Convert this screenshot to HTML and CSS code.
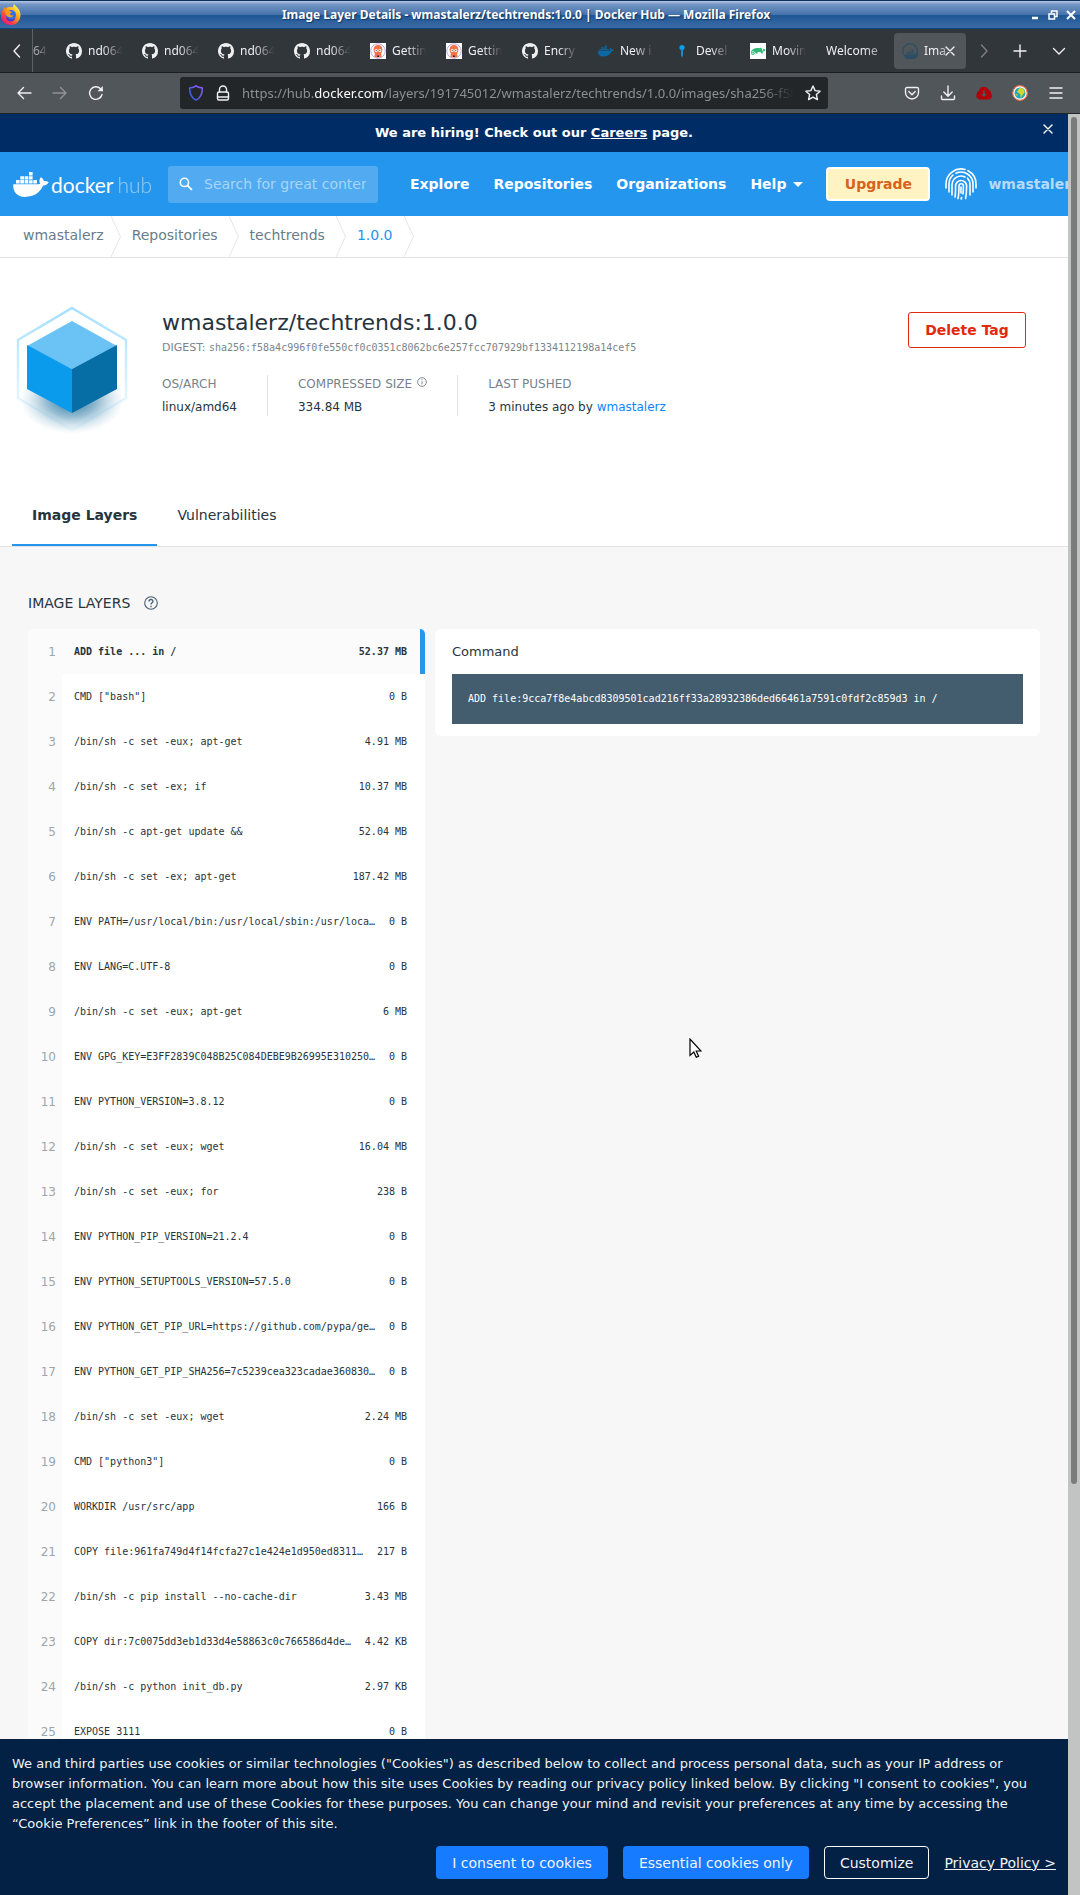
FILE: index.html
```html
<!DOCTYPE html>
<html lang="en">
<head>
<meta charset="utf-8">
<meta name="viewport" content="width=device-width, initial-scale=1">
<title>Image Layer Details - wmastalerz/techtrends:1.0.0 | Docker Hub</title>
<link rel="stylesheet" href="styles.css">
</head>
<body>
<svg class="defs" aria-hidden="true">
  <symbol id="github" viewBox="0 0 16 16"><path fill="currentColor" d="M8 0C3.58 0 0 3.58 0 8c0 3.54 2.29 6.53 5.47 7.59.4.07.55-.17.55-.38 0-.19-.01-.82-.01-1.49-2.01.37-2.53-.49-2.69-.94-.09-.23-.48-.94-.82-1.13-.28-.15-.68-.52-.01-.53.63-.01 1.08.58 1.23.82.72 1.21 1.87.87 2.33.66.07-.52.28-.87.51-1.07-1.78-.2-3.64-.89-3.64-3.95 0-.87.31-1.59.82-2.15-.08-.2-.36-1.02.08-2.12 0 0 .67-.21 2.2.82.64-.18 1.32-.27 2-.27s1.36.09 2 .27c1.53-1.04 2.2-.82 2.2-.82.44 1.1.16 1.92.08 2.12.51.56.82 1.27.82 2.15 0 3.07-1.87 3.75-3.65 3.95.29.25.54.73.54 1.48 0 1.07-.01 1.93-.01 2.2 0 .21.15.46.55.38A8.01 8.01 0 0 0 16 8c0-4.42-3.58-8-8-8z"/></symbol>
  <symbol id="whale" viewBox="0 30 642 452"><path fill="currentColor" d="M349.9 236.3h-66.1v-59.4h66.1v59.4zm0-204.3h-66.1v60.7h66.1V32zm78.2 144.8H362v59.4h66.1v-59.4zm-156.3-72.1h-66.1v60.1h66.1v-60.1zm78.1 0h-66.1v60.1h66.1v-60.1zm276.8 100c-14.4-9.7-47.6-13.2-73.1-8.4-3.3-24-16.7-44.9-41.1-63.7l-14-9.3-9.3 14c-18.4 27.8-23.4 73.6-3.7 103.8-8.7 4.7-25.8 11.1-48.4 10.7H2.4c-8.7 50.8 5.8 116.8 44 162.1 37.1 43.9 92.7 66.2 165.4 66.2 157.4 0 273.9-72.5 328.4-204.2 21.4.4 67.6.1 91.3-45.2 1.5-2.5 6.6-13.2 8.5-17.1l-13.3-8.9zm-511.1-27.9h-66v59.4h66.1v-59.4zm78.1 0h-66.1v59.4h66.1v-59.4zm78.1 0h-66.1v59.4h66.1v-59.4zm-78.1-72.1h-66.1v60.1h66.1v-60.1z"/></symbol>
  <symbol id="octopus" viewBox="0 0 16 16"><rect width="16" height="16" fill="#fff"/><circle cx="8" cy="8" r="7.2" fill="#fff" stroke="#b9a9dc"/><path fill="#f4734b" d="M8 2C5 2 3.600 4 3.600 6.400c0 1.600.5 2.600 1 3.600.4 1 .2 2.400-.4 3.400 1 .6 2.400 1 3.800 1s2.800-.4 3.800-1c-.6-1-.8-2.400-.4-3.400.5-1 1-2 1-3.600C12.400 4 11 2 8 2z"/><circle cx="6.200" cy="7.500" r="1.500" fill="#fff"/><circle cx="9.800" cy="7.500" r="1.500" fill="#fff"/><circle cx="6.200" cy="7.500" r=".6" fill="#333"/><circle cx="9.800" cy="7.500" r=".6" fill="#333"/><path d="M7 12.500h2v1.500H7z" fill="#333"/></symbol>
</svg>

<header class="browser">
  <div class="titlebar">
    <svg class="firefox" viewBox="0 0 22 22" aria-hidden="true">
      <defs>
        <linearGradient id="fx" x1="0.85" y1="0.1" x2="0.2" y2="0.95"><stop offset="0" stop-color="#fff44f"/><stop offset=".4" stop-color="#ffa31a"/><stop offset=".7" stop-color="#ff4a3a"/><stop offset="1" stop-color="#e31587"/></linearGradient>
      </defs>
      <path fill="url(#fx)" d="M3.200 5.500C3.700 4.500 4.500 3.400 5 3c0 .8.300 1.400.6 1.900C7.500 2.800 10 2.200 13 3.500c0-1.600.4-2.800 1.200-3.500.8 2 3.600 3.300 5 6 2.300 4.200 1.400 9.300-1.800 12.400-4 3.800-10.600 3.500-14.200-.6C.4 14.700.2 9.500 3.200 5.500z"/>
      <circle cx="11" cy="11" r="5" fill="#2a6ff0"/>
      <path fill="#4b3bbf" d="M6.500 12c1 3.500 6 5 9 1.500-.5 3-3 4-5 4-3 0-5-2.500-4-5.500z"/>
      <path fill="#ff9a1a" d="M5 6.500c1.500-1 3.500-1 4.500 0 .3 1 2 1 2.500 1.300-.3 1.200-2 1.600-2 2.400.2 1.500 2.500 1.600 3.500.8-.5 1.800-2.200 2.700-4 2.300C6.500 12.600 5 10 5 6.500z"/>
    </svg>
    <h1 class="window-title">Image Layer Details - wmastalerz/techtrends:1.0.0 | Docker Hub — Mozilla Firefox</h1>
    <div class="window-buttons">
      <button aria-label="Minimize"><svg viewBox="0 0 10 10"><path d="M2 8h6" stroke="#fff" stroke-width="2.500"/></svg></button>
      <button aria-label="Restore"><svg viewBox="0 0 10 10"><path d="M3.500 3V1H9v5.500H7M1 4h5.500v5H1z" fill="none" stroke="#fff" stroke-width="1.500"/></svg></button>
      <button aria-label="Close"><svg viewBox="0 0 10 10"><path d="M1 1l8 8M9 1L1 9" stroke="#fff" stroke-width="2"/></svg></button>
    </div>
  </div>

  <nav class="tabstrip" aria-label="Browser tabs">
    <button class="scroll-left" aria-label="Scroll left"><svg viewBox="0 0 10 14"><path d="M7.500 1L2 7l5.500 6" class="line"/></svg></button>
    <button class="tab cut"><span>64</span></button>
    <button class="tab"><svg><use href="#github"/></svg><span>nd064</span></button>
    <button class="tab"><svg><use href="#github"/></svg><span>nd064</span></button>
    <button class="tab"><svg><use href="#github"/></svg><span>nd064</span></button>
    <button class="tab"><svg><use href="#github"/></svg><span>nd064</span></button>
    <button class="tab"><svg><use href="#octopus"/></svg><span>Gettin</span></button>
    <button class="tab"><svg><use href="#octopus"/></svg><span>Gettin</span></button>
    <button class="tab"><svg><use href="#github"/></svg><span>Encry</span></button>
    <button class="tab"><svg class="teal"><use href="#whale"/></svg><span>New i</span></button>
    <button class="tab"><svg viewBox="0 0 16 16"><circle cx="8" cy="4.500" r="2.600" fill="#0f9fe8"/><path d="M7 6h2v6l-1 3-1-3z" fill="#0f8fd8"/></svg><span>Devel</span></button>
    <button class="tab"><svg viewBox="0 0 16 16"><rect width="16" height="16" fill="#fff"/><path fill="#30ba78" d="M1 8.500C2.500 5.500 6 4.600 9.500 5.200l1.500-.8.400 1c1.600.2 3.100.6 3.700 1.300l-.3 1.600-2.300.3.500 2h-1.600l-.9-1.500H7.500l.2 1.500H6l-.6-1.300c-.2 1.900-1.300 2.700-2.400 2.700C1.500 12 .5 10.500 1 8.500z"/><circle cx="3.200" cy="9.600" r="1.200" fill="none" stroke="#fff" stroke-width=".7"/><circle cx="12.500" cy="6.800" r=".7" fill="#fff"/></svg><span>Movin</span></button>
    <button class="tab wide"><span>Welcome</span></button>
    <button class="tab active"><svg viewBox="0 0 16 16"><circle cx="8" cy="8" r="7.300" fill="none" stroke="#2c4e63" stroke-width="1.200"/><svg x="2.500" y="4" width="11" height="8" color="#2c4e63"><use href="#whale"/></svg></svg><span>Ima</span></button>
    <button class="strip-icon dim" aria-label="Scroll right"><svg viewBox="0 0 10 14"><path d="M2.500 1L8 7l-5.500 6" class="line"/></svg></button>
    <button class="strip-icon" aria-label="New tab"><svg viewBox="0 0 14 14"><path d="M7 1v12M1 7h12" class="line"/></svg></button>
    <button class="strip-icon" aria-label="List all tabs"><svg viewBox="0 0 14 14"><path d="M1.500 4.500L7 10l5.500-5.500" class="line"/></svg></button>
    <button class="tab-close" aria-label="Close tab"><svg viewBox="0 0 10 10"><path d="M1 1l8 8M9 1L1 9" class="line"/></svg></button>
  </nav>

  <div class="toolbar">
    <div class="history">
      <button aria-label="Back"><svg viewBox="0 0 16 16"><path d="M15 8H2M7.500 2.500L2 8l5.500 5.500" class="line"/></svg></button>
      <button class="dim" aria-label="Forward"><svg viewBox="0 0 16 16"><path d="M1 8h13M8.500 2.500L14 8l-5.500 5.500" class="line"/></svg></button>
      <button aria-label="Reload"><svg viewBox="0 0 16 16"><path d="M14 9.500A6.300 6.300 0 1 1 12.500 3.800L14.300 5.500" class="line"/><path d="M14.800 1v5.200H9.600z" fill="currentColor"/></svg></button>
    </div>
    <div class="urlbar">
      <svg viewBox="0 0 16 16" aria-hidden="true"><defs><linearGradient id="sh" x1="1" y1="0" x2="0" y2="1"><stop offset="0" stop-color="#9059ff"/><stop offset="1" stop-color="#2a62d8"/></linearGradient></defs><path d="M8 .8c1.900 1.500 4.200 1.900 6.300 2.200.2 5.500-1.800 10-6.300 12.200C3.500 13 1.500 8.500 1.700 3 3.800 2.700 6.100 2.300 8 .8z" fill="none" stroke="url(#sh)" stroke-width="1.500"/></svg>
      <svg viewBox="0 0 16 16" aria-hidden="true"><rect x="2.500" y="7" width="11" height="8" rx="1.500" class="line"/><path d="M4.500 7V4.500a3.500 3.500 0 0 1 7 0V7M2.500 12h11" class="line"/></svg>
      <div class="url" role="textbox" aria-label="Address">https://hub.<b>docker.com</b>/layers/191745012/wmastalerz/techtrends/1.0.0/images/sha256-f58a4c</div>
      <button aria-label="Bookmark"><svg viewBox="0 0 16 16"><path d="M8 1l2.100 4.600 5 .6-3.700 3.400 1 5L8 12.100l-4.400 2.500 1-5L.9 6.200l5-.6z" class="line"/></svg></button>
    </div>
    <div class="tools">
      <button aria-label="Pocket"><svg viewBox="0 0 16 16"><path d="M3 2.500h10A1.500 1.500 0 0 1 14.500 4v3.500a6.500 6.500 0 0 1-13 0V4A1.500 1.500 0 0 1 3 2.500zM4.800 6.500L8 9.700l3.200-3.200" class="line"/></svg></button>
      <button aria-label="Downloads"><svg viewBox="0 0 16 16"><path d="M8 1v10M3.800 7L8 11.200 12.200 7M1.500 11v2.500a1 1 0 0 0 1 1h11a1 1 0 0 0 1-1V11" class="line"/></svg></button>
      <button aria-label="Cloud download"><svg viewBox="0 0 16 16"><path fill="#b00009" d="M3.500 14.500C1 14.500-.3 11.500.8 9 .8 7.200 1.800 5.900 3.200 5.700 3.400 3.200 5.500 1.700 7.800 1.700c2.300 0 4.200 1.300 4.800 3.400 1.700.4 2.600 2.100 2.500 3.700 1.700 2.200.4 5.700-2.600 5.700z"/><path fill="#50565a" d="M7.200 5.500h1.600V9H11l-3 3-3-3h2.200z"/></svg></button>
      <button aria-label="Translate"><svg viewBox="0 0 16 16"><circle cx="8" cy="8" r="7.300" fill="#fff" stroke="#e8704a" stroke-width="1.200"/><circle cx="8" cy="8" r="5.500" fill="#1fa6b8"/><path fill="#d6d52c" d="M7 3.500c2-1 4.500 0 5.500 2.500.3 2-.8 2.500-1.500 3.300L9.500 12H8.300l.2-2.500L6.500 8 5 7zM3.500 9l2 .5-.3 2z"/></svg></button>
      <button aria-label="Menu"><svg viewBox="0 0 16 16"><path d="M2 3h12M2 8h12M2 13h12" class="line"/></svg></button>
    </div>
  </div>
</header>

<div class="viewport">
  <div class="site">
    <div class="scroller">
      <aside class="hiring">
        <p>We are hiring! Check out our <a href="#careers">Careers</a> page.</p>
        <button aria-label="Dismiss"><svg viewBox="0 0 10 10"><path d="M1 1l8 8M9 1L1 9" class="line"/></svg></button>
      </aside>

      <nav class="hubnav" aria-label="Main">
        <a class="logo" href="#home"><svg aria-hidden="true"><use href="#whale"/></svg><span>docker</span><span class="hub">hub</span></a>
        <label class="search">
          <svg viewBox="0 0 16 16" aria-hidden="true"><circle cx="6.200" cy="6.200" r="4.700" fill="none" stroke="#fff" stroke-width="1.800"/><path d="M9.800 9.800l5 5" stroke="#fff" stroke-width="2"/></svg>
          <input type="text" aria-label="Search" placeholder="Search for great content">
        </label>
        <div class="links">
          <a href="#explore">Explore</a>
          <a href="#repositories">Repositories</a>
          <a href="#organizations">Organizations</a>
          <button class="help">Help<svg viewBox="0 0 10 5" aria-hidden="true"><path d="M0 0h10L5 5z" fill="#fff"/></svg></button>
        </div>
        <button class="upgrade">Upgrade</button>
        <a class="user" href="#profile">
          <svg viewBox="0 0 32 32" aria-hidden="true"><g fill="none" stroke="#fff" stroke-width="1.600" stroke-linecap="round"><path d="M1 20v-4A15 15 0 0 1 20 1.500M23 2.700A15 15 0 0 1 31 16v4"/><path d="M4 24v-8A12 12 0 0 1 8 7M11 5.200A12 12 0 0 1 28 16v8"/><path d="M7 27V17a9 9 0 0 1 13-8M22.500 10.200A9 9 0 0 1 25 17v10"/><path d="M10 29c.6-3 .6-6 .6-11a5.500 5.500 0 0 1 11 0c0 5-.1 8-1 12.500"/><path d="M13 30.500c1-4 1-8 1-12.500a2.200 2.200 0 0 1 4.400 0c0 3 0 5-.4 8"/><path d="M16 19v6M16.500 29.500l-.3 1.500"/></g></svg>
          <span>wmastalerz</span>
        </a>
      </nav>

      <nav class="crumbs" aria-label="Breadcrumb">
        <a href="#u">wmastalerz</a><svg viewBox="0 0 10 40" preserveAspectRatio="none"><path d="M0 0l9.500 20L0 40"/></svg>
        <a href="#r">Repositories</a><svg viewBox="0 0 10 40" preserveAspectRatio="none"><path d="M0 0l9.500 20L0 40"/></svg>
        <a href="#t">techtrends</a><svg viewBox="0 0 10 40" preserveAspectRatio="none"><path d="M0 0l9.500 20L0 40"/></svg>
        <a href="#v" class="current" aria-current="page">1.0.0</a><svg viewBox="0 0 10 40" preserveAspectRatio="none"><path d="M0 0l9.500 20L0 40"/></svg>
      </nav>

      <section class="summary">
        <svg class="cube" viewBox="0 0 114 136" aria-hidden="true">
          <defs>
            <linearGradient id="hex" x1="0" y1="0" x2="0" y2="1"><stop offset="0" stop-color="#a5dfff"/><stop offset=".6" stop-color="#d8f2ff"/><stop offset="1" stop-color="#f4fbff"/></linearGradient>
            <radialGradient id="shade"><stop offset="0" stop-color="#005b8c" stop-opacity=".9"/><stop offset=".5" stop-color="#2f7ba6" stop-opacity=".5"/><stop offset="1" stop-color="#8fbdd6" stop-opacity="0"/></radialGradient>
          </defs>
          <path d="M57 2l54 32v58l-54 32L3 92V34z" fill="none" stroke="url(#hex)" stroke-width="2.500"/>
          <ellipse cx="57" cy="94" rx="52" ry="34" fill="url(#shade)"/>
          <path d="M57 15l45 25-45 23-45-23z" fill="#6bc3f5"/>
          <path d="M12 39l45 24v44L12 83z" fill="#0b9bed"/>
          <path d="M102 39L57 63v44l45-24z" fill="#066da5"/>
        </svg>
        <div class="info">
          <h2>wmastalerz/techtrends:1.0.0</h2>
          <p class="digest">DIGEST: <code>sha256:f58a4c996f0fe550cf0c0351c8062bc6e257fcc707929bf1334112198a14cef5</code></p>
          <dl class="facts">
            <div><dt>OS/ARCH</dt><dd>linux/amd64</dd></div>
            <div><dt>COMPRESSED SIZE<svg viewBox="0 0 10 10" aria-hidden="true"><circle cx="5" cy="5" r="4.300" fill="none" stroke="#7b8a94"/><path d="M5 4.300v3M5 2.300v1" stroke="#7b8a94"/></svg></dt><dd>334.84 MB</dd></div>
            <div><dt>LAST PUSHED</dt><dd>3 minutes ago by <a href="#u">wmastalerz</a></dd></div>
          </dl>
        </div>
        <button class="delete">Delete Tag</button>
      </section>

      <div class="page-tabs" role="tablist">
        <button role="tab" aria-selected="true">Image Layers</button>
        <button role="tab" aria-selected="false">Vulnerabilities</button>
      </div>

      <main class="layers">
        <h3>IMAGE LAYERS<svg viewBox="0 0 14 14" aria-hidden="true"><circle cx="7" cy="7" r="6.300" fill="none" stroke="#445d6e" stroke-width="1.100"/><path d="M5 5.500c0-2.700 4-2.600 4-.2C9 6.800 7 6.800 7 8.500M7 9.800v1.400" fill="none" stroke="#445d6e" stroke-width="1.300"/></svg></h3>
        <div class="columns">
          <ol class="list">
            <li class="selected"><i>1</i><span>ADD file ... in /</span><b>52.37 MB</b></li>
            <li><i>2</i><span>CMD ["bash"]</span><b>0 B</b></li>
            <li><i>3</i><span>/bin/sh -c set -eux; apt-get</span><b>4.91 MB</b></li>
            <li><i>4</i><span>/bin/sh -c set -ex; if</span><b>10.37 MB</b></li>
            <li><i>5</i><span>/bin/sh -c apt-get update &amp;&amp;</span><b>52.04 MB</b></li>
            <li><i>6</i><span>/bin/sh -c set -ex; apt-get</span><b>187.42 MB</b></li>
            <li><i>7</i><span>ENV PATH=/usr/local/bin:/usr/local/sbin:/usr/loca…</span><b>0 B</b></li>
            <li><i>8</i><span>ENV LANG=C.UTF-8</span><b>0 B</b></li>
            <li><i>9</i><span>/bin/sh -c set -eux; apt-get</span><b>6 MB</b></li>
            <li><i>10</i><span>ENV GPG_KEY=E3FF2839C048B25C084DEBE9B26995E310250…</span><b>0 B</b></li>
            <li><i>11</i><span>ENV PYTHON_VERSION=3.8.12</span><b>0 B</b></li>
            <li><i>12</i><span>/bin/sh -c set -eux; wget</span><b>16.04 MB</b></li>
            <li><i>13</i><span>/bin/sh -c set -eux; for</span><b>238 B</b></li>
            <li><i>14</i><span>ENV PYTHON_PIP_VERSION=21.2.4</span><b>0 B</b></li>
            <li><i>15</i><span>ENV PYTHON_SETUPTOOLS_VERSION=57.5.0</span><b>0 B</b></li>
            <li><i>16</i><span>ENV PYTHON_GET_PIP_URL=https://github.com/pypa/ge…</span><b>0 B</b></li>
            <li><i>17</i><span>ENV PYTHON_GET_PIP_SHA256=7c5239cea323cadae360830…</span><b>0 B</b></li>
            <li><i>18</i><span>/bin/sh -c set -eux; wget</span><b>2.24 MB</b></li>
            <li><i>19</i><span>CMD ["python3"]</span><b>0 B</b></li>
            <li><i>20</i><span>WORKDIR /usr/src/app</span><b>166 B</b></li>
            <li><i>21</i><span>COPY file:961fa749d4f14fcfa27c1e424e1d950ed8311…</span><b>217 B</b></li>
            <li><i>22</i><span>/bin/sh -c pip install --no-cache-dir</span><b>3.43 MB</b></li>
            <li><i>23</i><span>COPY dir:7c0075dd3eb1d33d4e58863c0c766586d4de…</span><b>4.42 KB</b></li>
            <li><i>24</i><span>/bin/sh -c python init_db.py</span><b>2.97 KB</b></li>
            <li><i>25</i><span>EXPOSE 3111</span><b>0 B</b></li>
          </ol>
          <section class="command">
            <h4>Command</h4>
            <pre>ADD file:9cca7f8e4abcd8309501cad216ff33a28932386ded66461a7591c0fdf2c859d3 in /</pre>
          </section>
        </div>
      </main>
    </div>

    <footer class="cookies">
      <p>We and third parties use cookies or similar technologies ("Cookies") as described below to collect and process personal data, such as your IP address or browser information. You can learn more about how this site uses Cookies by reading our privacy policy linked below. By clicking "I consent to cookies", you accept the placement and use of these Cookies for these purposes. You can change your mind and revisit your preferences at any time by accessing the “Cookie Preferences” link in the footer of this site.</p>
      <div class="choices">
        <button>I consent to cookies</button>
        <button>Essential cookies only</button>
        <button class="outline">Customize</button>
        <a href="#privacy">Privacy Policy &gt;</a>
      </div>
    </footer>
  </div>
  <div class="scrollbar"><div class="thumb"></div></div>
</div>

<svg class="pointer" viewBox="0 0 13 20" aria-hidden="true"><path d="M1 1v16.500l3.800-3.500L7.300 19.300l2.300-1-2.400-5.300H12z" fill="#fff" stroke="#000" stroke-width="1.200"/></svg>
</body>
</html>
```

FILE: styles.css
```css
* { box-sizing: border-box; }

body {
  margin: 0;
  height: 100vh;
  display: flex;
  flex-direction: column;
  overflow: hidden;
  position: relative;
  font-family: "DejaVu Sans", sans-serif;
  font-size: 14px;
  color: #27343d;
}

h1, h2, h3, h4, p, dl, dd, ol, pre { margin: 0; padding: 0; font-weight: normal; }
button { font: inherit; color: inherit; background: none; border: 0; padding: 0; }
a { color: inherit; text-decoration: none; }
svg { display: block; flex: none; }
.defs { display: none; }
.line { fill: none; stroke: currentColor; stroke-width: 1.4; stroke-linecap: round; stroke-linejoin: round; }

/* Browser chrome */
.browser { font-family: "Noto Sans", sans-serif; color: #eff0f1; }

.titlebar {
  display: flex;
  align-items: center;
  height: 29px;
  padding: 0 4px 0 0;
  border-top: 1px solid #0c2f5e;
  border-bottom: 1px solid #0c4682;
  background: linear-gradient(#b5c8e4 0, #7496c6 12%, #4673ab 50%, #1d5795 52%, #3c6ba6 100%);
}
.firefox { width: 22px; height: 22px; }
.window-title { flex: 1; text-align: center; font-size: 12px; font-weight: bold; line-height: 20px; color: #fff; text-shadow: 1px 1px 1px #12345e; white-space: nowrap; }
.window-buttons { display: flex; gap: 8px; }
.window-buttons svg { width: 10px; height: 10px; }

.tabstrip {
  position: relative;
  display: flex;
  align-items: center;
  height: 44px;
  background: #31363b;
  border-bottom: 1px solid #1d2023;
  font-size: 12px;
}
.scroll-left { width: 33px; height: 43px; padding-left: 12px; border-right: 1px solid #5c6165; }
.scroll-left svg { width: 10px; height: 14px; }
.tab { display: flex; align-items: center; gap: 6px; width: 76px; height: 36px; padding: 0 8px; flex: none; }
.tab svg { width: 16px; height: 16px; }
.tab > span { width: 36px; overflow: hidden; white-space: nowrap; text-align: left; mask-image: linear-gradient(90deg, #000 40%, transparent 95%); }
.tab.cut { width: 25px; padding: 0; }
.tab.cut > span { width: 15px; opacity: .6; }
.tab.wide > span { width: 60px; mask-image: linear-gradient(90deg, #000 60%, #0006 100%); }
.tab.active { width: 72px; background: #50565a; border-radius: 4px; }
.teal { color: #0b6aa5; }
.tab-close { position: absolute; right: 125px; top: 17px; }
.tab-close svg { width: 10px; height: 10px; }
.strip-icon { display: flex; justify-content: center; width: 36px; }
.strip-icon:nth-last-child(2) { flex: 1; }
.strip-icon svg { width: 14px; height: 14px; }
.dim { opacity: .4; }

.toolbar {
  display: flex;
  align-items: center;
  height: 41px;
  padding: 0 16px;
  background: #50565a;
  border-bottom: 1px solid #23272a;
}
.toolbar svg { width: 16px; height: 16px; }
.history { display: flex; gap: 20px; width: 164px; }
.urlbar { display: flex; align-items: center; gap: 11px; flex: 1; min-width: 0; height: 32px; padding: 0 7px 0 8px; border-radius: 3px; background: #232629; }
.url { flex: 1; min-width: 0; overflow: hidden; white-space: nowrap; font-size: 13px; line-height: 20px; color: #8b9093; mask-image: linear-gradient(90deg, #000 94%, transparent 100%); }
.url b { font-weight: normal; color: #fcfcfc; }
.tools { display: flex; gap: 20px; padding-left: 76px; }

/* Page area */
.viewport { flex: 1; min-height: 0; display: flex; }
.site { flex: 1; min-width: 0; display: flex; flex-direction: column; }
.scroller { flex: 1; min-height: 0; overflow: hidden; background: #f7f7f7; }
.scrollbar { width: 12px; padding: 3px; background: #c2c4c3; }
.thumb { height: 77%; border-radius: 3px; background: #797c7b; }

.hiring { display: flex; align-items: center; height: 38px; padding: 0 15px 2px 25px; background: #002c66; color: #fff; font-size: 13px; }
.hiring p { flex: 1; text-align: center; font-weight: bold; }
.hiring a { text-decoration: underline; }
.hiring svg { width: 10px; height: 10px; margin-bottom: 6px; }

.hubnav { display: flex; align-items: center; height: 64px; padding-left: 13px; background: #2496ed; color: #fff; overflow: hidden; font-weight: bold; }
.hubnav > * { flex: none; }
.logo { display: flex; align-items: center; width: 155px; font: 21px Lato, sans-serif; }
.logo svg { width: 36px; height: 25px; margin-right: 2px; }
.logo .hub { margin-left: 4px; opacity: .5; font-weight: 300; }
.search { display: flex; align-items: center; gap: 11px; width: 210px; height: 37px; padding: 0 12px 0 11px; border-radius: 3px; background: #52abf1; }
.search svg { width: 14px; height: 14px; }
.search input { flex: 1; min-width: 0; padding: 0; border: 0; background: none; font: 14px "DejaVu Sans", sans-serif; color: #fff; }
.search input::placeholder { color: #a8d5f8; opacity: 1; }
.links { display: flex; gap: 24px; margin-left: 32px; }
.help { display: flex; align-items: center; gap: 7px; }
.help svg { width: 10px; height: 5px; }
.upgrade { width: 104px; height: 34px; margin-left: 23px; border: 2px solid #fff; border-radius: 4px; background: #fff3c4; color: #d8611c; }
.user { display: flex; align-items: center; gap: 11px; margin-left: 15px; color: #b6dbf9; }
.user svg { width: 32px; height: 32px; }

.crumbs { display: flex; height: 42px; padding-left: 23px; background: #fff; border-bottom: 1px solid #e1e2e6; color: #677d8a; line-height: 38px; }
.crumbs svg { width: 10px; height: 41px; margin: 0 11px; fill: none; stroke: #e5e7ea; }
.crumbs svg:first-of-type { margin-left: 7px; }
.crumbs .current { color: #2496ed; }

.summary { display: flex; align-items: flex-start; height: 218px; padding: 48px 42px 0 15px; background: #fff; }
.cube { width: 114px; height: 136px; }
.info { flex: 1; min-width: 0; margin-left: 33px; padding-top: 3px; }
.info h2 { font-size: 22px; line-height: 28px; }
.digest { margin-top: 1px; font-size: 11px; line-height: 20px; color: #7a858c; white-space: nowrap; }
code, pre, .list { font-family: "DejaVu Sans Mono", monospace; font-size: 10px; }
.facts { display: flex; margin-top: 17px; font-size: 12px; line-height: 18px; }
.facts div { display: grid; gap: 5px; padding-right: 30px; }
.facts div + div { padding-left: 30px; border-left: 1px solid #e1e2e6; }
.facts dt { display: flex; gap: 5px; color: #77828a; }
.facts dt svg { width: 10px; height: 10px; margin-top: 2px; }
.facts a { color: #0d84ff; }
.delete { width: 118px; height: 36px; margin-top: 6px; border: 1px solid #e2290f; border-radius: 3px; color: #e2290f; font-weight: bold; }

.page-tabs { display: flex; height: 71px; padding-left: 12px; background: #fff; border-bottom: 1px solid #e1e2e6; }
.page-tabs button { padding: 9px 20px 0; border-bottom: 2px solid transparent; }
.page-tabs [aria-selected="true"] { font-weight: bold; border-color: #2496ed; }

.layers { padding: 46px 28px 0; }
.layers h3 { display: flex; align-items: center; gap: 14px; font-size: 14px; line-height: 20px; }
.layers h3 svg { width: 14px; height: 14px; }
.columns { display: grid; grid-template-columns: minmax(0, 397fr) minmax(0, 605fr); gap: 10px; align-items: start; margin-top: 16px; }
.list { list-style: none; border-radius: 5px; overflow: hidden; background: #fff; line-height: 20px; }
.list li { display: grid; grid-template-columns: 34px minmax(0, 1fr) auto; align-items: center; height: 45px; padding-right: 18px; }
.list i { display: flex; align-items: center; justify-content: flex-end; align-self: stretch; padding-right: 6px; background: #fbfbfb; color: #9ba6ae; font: 12px "DejaVu Sans", sans-serif; }
.list span { padding-left: 12px; overflow: hidden; text-overflow: ellipsis; white-space: nowrap; }
.list b { padding-left: 11px; font-weight: normal; }
.list .selected { padding-right: 13px; border-right: 5px solid #2496ed; background: #fbfbfb; }
.list .selected span, .list .selected b { font-weight: bold; }
.command { padding: 14px 17px 12px; border-radius: 6px; background: #fff; }
.command h4 { font-size: 13px; line-height: 18px; }
.command pre { margin-top: 13px; padding: 15px 16px; background: #445d6e; color: #fff; line-height: 20px; overflow: hidden; }

.cookies { padding: 15px 12px 16px; background: #022144; color: #f0f3f6; font-size: 13px; line-height: 20px; }
.cookies p { padding-right: 20px; }
.choices { display: flex; justify-content: flex-end; align-items: center; gap: 15px; margin-top: 12px; font-size: 14px; }
.choices button { height: 33px; padding: 0 16px; border-radius: 4px; background: #167bff; }
.choices .outline { padding: 0 15px; border: 1px solid #fff; background: none; }
.choices a { text-decoration: underline; }

.pointer { position: absolute; left: 689px; top: 1038px; width: 13px; height: 20px; }
```
